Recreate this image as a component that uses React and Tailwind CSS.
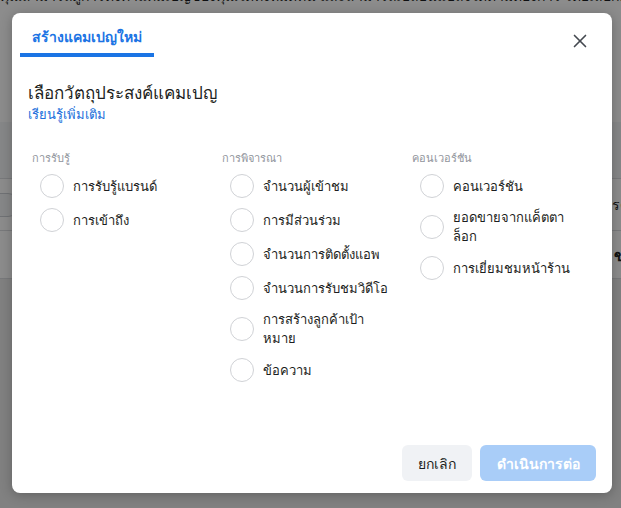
import { X } from 'lucide-react';

const columns = [
  {
    title: 'การรับรู้',
    items: [['การรับรู้แบรนด์'], ['การเข้าถึง']],
  },
  {
    title: 'การพิจารณา',
    items: [
      ['จำนวนผู้เข้าชม'],
      ['การมีส่วนร่วม'],
      ['จำนวนการติดตั้งแอพ'],
      ['จำนวนการรับชมวิดีโอ'],
      ['การสร้างลูกค้าเป้า', 'หมาย'],
      ['ข้อความ'],
    ],
  },
  {
    title: 'คอนเวอร์ชัน',
    items: [['คอนเวอร์ชัน'], ['ยอดขายจากแค็ตตา', 'ล็อก'], ['การเยี่ยมชมหน้าร้าน']],
  },
];

function Radio({ lines }) {
  return (
    <label className="flex items-center gap-[9px] pl-2 cursor-pointer">
      <span className="w-6 h-6 shrink-0 rounded-full border border-[#d0d2d6] bg-white" />
      <span className="text-[13px] leading-[19px] text-[#1c1e21] whitespace-nowrap">
        {lines.map((l, i) => (
          <span key={i} className="block">{l}</span>
        ))}
      </span>
    </label>
  );
}

export default function App() {
  return (
    <div className="relative w-[621px] h-[508px] overflow-hidden bg-[#ececec]" style={{ fontFamily: '"Noto Sans", "Open Sans", sans-serif' }}>
      {/* page behind the dialog */}
      <div className="bg-white">
        <div className="-mt-[14px] text-[14px] leading-5 text-[#1c1e21] whitespace-nowrap">
          คุณสามารถดูการตั้งค่าแคมเปญของคุณได้ทั้งหมดที่นี่ และสามารถเปลี่ยนแปลงได้ตามต้องการ โดยเลือกแคมเปญที่คุณต้องการอัปเดต
        </div>
        <div className="h-[116px]" />
        <div className="h-[57px] bg-[#f5f6f7] border-b border-[#dadde1]" />
        <div className="h-[52px] border-b border-[#dadde1] flex items-center justify-between px-1 text-[14px] text-[#1c1e21]">
          <span className="w-10 h-6 -ml-6 rounded-full border border-[#ccd0d5] bg-[#f5f6f7]" />
          <span className="-mr-3">รต</span>
        </div>
        <div className="h-[48px] border-b border-[#dadde1] flex items-center justify-end text-[16px] font-bold text-[#1c1e21]">
          <span className="-mr-1">ข</span>
        </div>
      </div>

      {/* backdrop */}
      <div className="absolute inset-0 bg-black/45" />

      {/* dialog */}
      <div className="absolute left-[12px] top-[13px] w-[600px] h-[480px] bg-white rounded-lg shadow-[0_2px_12px_rgba(0,0,0,0.25)] flex flex-col">
        <div className="flex items-start justify-between pl-2 pr-[21px]">
          <div className="flex flex-col">
            <div className="pt-[14px] pb-[6px] px-3 text-[14px] leading-5 font-bold text-[#1b74e4]">สร้างแคมเปญใหม่</div>
            <div className="h-1 bg-[#1b74e4]" />
          </div>
          <button className="mt-[17px] text-[#444950]">
            <X size={22} strokeWidth={1.8} />
          </button>
        </div>

        <div className="px-4 pt-[25px]">
          <h1 className="text-[17px] leading-[22px] text-[#1c1e21]">เลือกวัตถุประสงค์แคมเปญ</h1>
          <a className="block mt-[2px] text-[13px] leading-4 font-medium text-[#216fdb]">เรียนรู้เพิ่มเติม</a>
        </div>

        <div className="flex pl-5 pt-[28px]">
          {columns.map((col) => (
            <div key={col.title} className="w-[190px] flex flex-col">
              <div className="text-[11px] leading-4 text-[#90949c] mb-[8px]">{col.title}</div>
              <div className="flex flex-col gap-[10px]">
                {col.items.map((lines) => (
                  <Radio key={lines.join('')} lines={lines} />
                ))}
              </div>
            </div>
          ))}
        </div>

        <div className="flex-1" />

        <div className="flex justify-end gap-2 px-4 pb-3">
          <button className="h-9 w-[70px] rounded-md bg-[#f0f2f5] text-[14px] text-[#1c1e21]">ยกเลิก</button>
          <button className="h-9 w-[116px] rounded-md bg-[#a9cdf8] text-[14px] font-bold text-white">ดำเนินการต่อ</button>
        </div>
      </div>
    </div>
  );
}
